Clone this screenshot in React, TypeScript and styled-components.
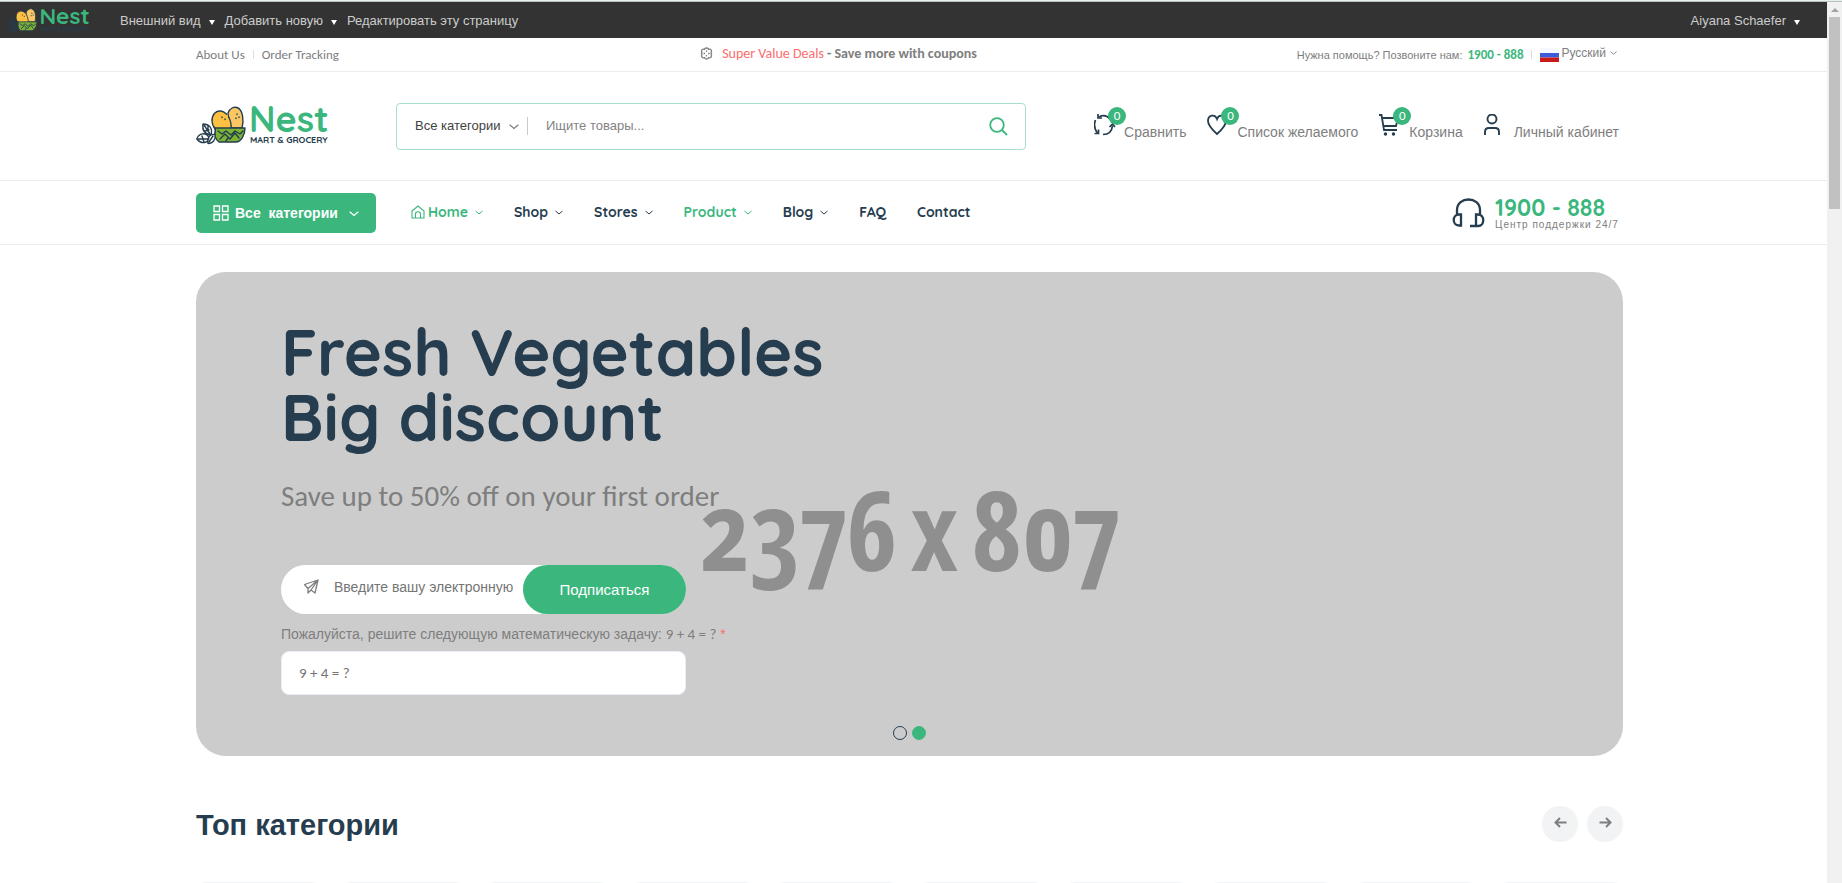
import React from 'react';
import styled, { createGlobalStyle, css } from 'styled-components';

const green = '#3bb77e';
const navy = '#253d4e';
const grey = '#7e7e7e';
const line = '#ececec';
const arial = '"Liberation Sans", Arial, sans-serif';
const lato = 'Carlito, Lato, "Liberation Sans", sans-serif';
const quick = 'Quicksand, "Liberation Sans", sans-serif';

const GlobalStyle = createGlobalStyle`
  * { box-sizing: border-box; }
  body { margin: 0; background: #fff; color: ${grey}; font: 400 14px/20px ${arial}; overflow: hidden; }
  a { color: inherit; text-decoration: none; }
  button, input, select { font: inherit; color: inherit; margin: 0; padding: 0; border: 0; background: none; outline: 0; }
  button { cursor: pointer; }
  h1, h2, p { margin: 0; }
  svg { display: block; flex: none; }
`;

const Shell = styled.div`display: flex; height: 100vh; flex-direction: column;`;
const Edge = styled.div`height: 2px; flex: none; background: #e9eeee; border-bottom: 1px solid #b9c1c1;`;
const View = styled.div`display: flex; flex: 1; min-height: 0;`;
const Page = styled.main`flex: 1; min-width: 0; overflow: hidden;`;

const Track = styled.div`
  width: 15px; flex: none; background: #f1f1f1; display: flex; flex-direction: column; align-items: center; padding-top: 6px; gap: 5px;
`;
const TrackArrow = styled.i`border: 4px solid transparent; border-top: 0; border-bottom: 4px solid #a3a3a3;`;
const Thumb = styled.div`width: 11px; height: 192px; background: #c1c1c1;`;

const gutter = css`padding: 0 204px 0 196px;`;

const AdminBar = styled.div`
  height: 36px; background: #333; color: #ccc; display: flex; align-items: center; padding: 2px 25px 0 6px; font-size: 13px;
`;
const AdminLogo = styled.a`margin: 0 32px 0 0;`;
const AdminNav = styled.nav`display: flex; gap: 10px;`;
const AdminButton = styled.button`display: flex; align-items: center; gap: 8px;`;
const Caret = styled.i`border: 3px solid transparent; border-bottom: 0; border-top: 5px solid #fff; margin-top: 3px;`;
const AdminUser = styled.div`margin-left: auto; padding-right: 2px;`;

const TopBar = styled.div`
  ${gutter} height: 34px; border-bottom: 1px solid ${line}; display: grid; grid-template-columns: 1fr auto 1fr; align-items: center;
  font: 400 13px/20px ${lato};
`;
const TopGroup = styled.div<{ end?: boolean }>`
  display: flex; align-items: center; ${p => p.end && 'justify-content: flex-end; padding-right: 6px;'}
`;
const Divider = styled.i`width: 1px; height: 9px; background: #ddd; margin: 0 8px;`;
const Deal = styled.p`display: flex; align-items: center; gap: 9px; font-size: 14px; font-weight: 700; padding-bottom: 2px; margin-right: 142px;`;
const DealLink = styled.a`color: #fd6e6e; font-weight: 400;`;
const Help = styled.span`font-family: ${arial}; font-size: 11px;`;
const HelpPhone = styled.a`color: ${green}; font-weight: 700; margin-left: 5px;`;
const Language = styled.button`display: flex; align-items: center; gap: 2px; font-family: ${arial}; font-size: 12px;`;
const LanguageName = styled.span`padding-bottom: 4px; display: flex; align-items: center; gap: 4px;`;

const Header = styled.header`${gutter} height: 109px; border-bottom: 1px solid ${line}; display: flex; align-items: center;`;
const LogoLink = styled.a`margin: 0 70px 0 0;`;
const Search = styled.form`
  flex: 0 1 630px; height: 47px; border: 1px solid #a9dfc6; border-radius: 4px; display: flex; align-items: center; padding: 0 17px 0 18px;
`;
const CategoryPick = styled.div`display: flex; align-items: center; border-right: 1px solid #cacaca; height: 18px; padding-right: 8px;`;
const CategorySelect = styled.select`appearance: none; color: #3f3f3f; font-size: 13px; line-height: 18px; width: 94px; cursor: pointer;`;
const SearchInput = styled.input`flex: 1; min-width: 0; margin-left: 18px; font-size: 13px; &::placeholder { color: #838383; opacity: 1; }`;
const Actions = styled.nav`margin-left: auto; padding: 3px 4px 0 0; display: flex; gap: 21px;`;
const Action = styled.a`display: flex; align-items: flex-start; gap: 8px; position: relative;`;
const ActionLabel = styled.span`padding-top: 8px;`;
const Badge = styled.span`
  position: absolute; left: 14px; top: -7px; width: 18px; height: 18px; border-radius: 50%; background: ${green}; color: #fff;
  font: 400 13px/18px ${lato}; text-align: center;
`;

const NavBar = styled.div`${gutter} height: 64px; border-bottom: 1px solid ${line}; display: flex; align-items: center;`;
const BrowseButton = styled.button`
  height: 40px; width: 180px; border-radius: 5px; background: ${green}; color: #fff; display: flex; align-items: center; padding: 0 17px;
  font: 700 14px/20px ${arial}; white-space: pre;
`;
const BrowseText = styled.span`margin: 0 auto 0 6px;`;
const Menu = styled.nav`display: flex; gap: 31px; margin-left: 35px; padding-bottom: 2px; font: 700 14px/20px ${quick}; color: ${navy};`;
const MenuLink = styled.a<{ active?: boolean }>`display: flex; align-items: center; gap: 3px; ${p => p.active && `color: ${green};`}`;
const MenuText = styled.span`margin-right: 4px;`;
const Hotline = styled.div`margin-left: auto; display: flex; align-items: center; gap: 10px;`;
const HotlineText = styled.div`min-width: 128px;`;
const HotlinePhone = styled.a`display: block; color: ${green}; font: 700 23px/24px ${quick};`;
const HotlineNote = styled.span`display: block; font-size: 10px; line-height: 10px; letter-spacing: 1px;`;

const Content = styled.div`${gutter} padding-top: 27px;`;
const Hero = styled.section`height: 484px; border-radius: 30px; background: #ccc; position: relative; padding: 47px 86px 0 85px; overflow: hidden;`;
const HeroSize = styled.div`
  position: absolute; inset: 0; display: flex; align-items: center; justify-content: center; gap: 13px; padding-top: 28px;
  font: 700 110px/120px "Open Sans Condensed", "Open Sans", sans-serif; font-variant-numeric: oldstyle-nums; color: #8f8f8f;
`;
const HeroBody = styled.div`position: relative;`;
const HeroTitle = styled.h1`font: 700 65px/65px ${quick}; color: ${navy};`;
const HeroLead = styled.p`font: 400 29px/36px ${lato}; margin-top: 29px;`;
const Subscribe = styled.form`margin-top: 51px; width: 405px;`;
const Pill = styled.div`display: flex; height: 49px; border-radius: 25px; background: #fff; padding-left: 22px;`;
const PillIcon = styled.span`padding-top: 14px; margin-right: 15px;`;
const PillInput = styled.input`flex: 1; min-width: 0; margin-right: 10px; padding-bottom: 6px; &::placeholder { color: #757575; opacity: 1; }`;
const PillButton = styled.button`width: 163px; border-radius: 25px; background: ${green}; color: #fff; font: 400 15px/20px ${arial};`;
const TaskLabel = styled.label`display: block; white-space: nowrap; margin: 10px 0 7px;`;
const Star = styled.span`color: #fd6e6e;`;
const TaskSum = styled.span`font-family: ${lato}; font-size: 15px;`;
const TaskInput = styled.input`
  display: block; width: 100%; height: 44px; border-radius: 8px; border: 1px solid #ecebfa; background: #fff; padding: 0 17px;
  font-family: ${lato}; font-size: 15px;
  &::placeholder { color: #757575; opacity: 1; }
`;
const Dots = styled.div`position: absolute; bottom: 16px; left: 0; right: 0; display: flex; justify-content: center; gap: 5px;`;
const Dot = styled.button<{ on?: boolean }>`
  width: 14px; height: 14px; border-radius: 50%; border: 1px solid ${p => (p.on ? green : navy)}; background: ${p => (p.on ? green : 'transparent')};
`;

const SectionHead = styled.div`display: flex; align-items: center; justify-content: space-between; margin: 49px 0 39px;`;
const SectionTitle = styled.h2`font: 700 29px/36px ${arial}; color: ${navy}; padding-top: 2px;`;
const Arrows = styled.div`display: flex; gap: 9px;`;
const ArrowButton = styled.button`width: 36px; height: 36px; border-radius: 50%; background: #f2f3f4; display: grid; place-items: center; padding-bottom: 3px;`;
const Cards = styled.div`display: grid; grid-template-columns: repeat(10, 1fr); gap: 20px;`;
const Card = styled.article`height: 180px; border: 1px solid #f2f3f4; border-radius: 10px;`;

const LogoMark = styled.svg`overflow: visible;`;

const Logo = ({ width, dim }: { width: number; dim?: boolean }) => (
  <LogoMark width={width} viewBox="0 0 130 40" role="img" aria-label="Nest">
    <g stroke={navy} strokeWidth="1.400" strokeLinecap="round" strokeLinejoin="round">
      <path d="M32 7C34 2 38 .8 41 1.500c6 2 7 13 5 20.500H34z" fill="#fbc765" />
      <path d="M16 15C16 8 20 4.500 25 5c6 1 11 9 10 18H19c-2-3-3-5-3-8z" fill="#fdc040" strokeDasharray="22 3" />
      <path d="M19 22h30c0 7-4 14-9 14H23c-4-3-5-9-4-14z" fill="#7cb236" />
      <path d="M22 25l4 3 4-3 5 4 4-4 5 3 3-3M24 33l5-5 5 5 5-6 4 5M30 35l2-3" fill="none" />
      <path d="M26 11v.5M29 13v.5M41 8v.5M43 11v.5M40 12v.5" fill="none" />
      <g fill={dim ? 'none' : '#fff'}>
        <path d="M7 18c6 0 10 4 8 11-6-1-9-5-8-11zM18 21c3 4 1 10-5 12" />
        <path d="M.8 33c2-6 9-7 12-2 0 6-7 8-12 2zM12 37.500c-1-6 2-10 7-9 1 5-2 9-7 9z" />
        <path d="M8 19l6 9M2 33h10M13 36l4-6M6 30l2 6M9 25l4-1M12 20v5" fill="none" />
      </g>
    </g>
    <text x="53" y="26" fontFamily="Quicksand" fontWeight="700" fontSize="36" fill={green}>Nest</text>
    <text x="54" y="37" fontFamily="Quicksand" fontWeight="700" fontSize="9" fill={navy}>MART &amp; GROCERY</text>
  </LogoMark>
);

const Chevron = ({ w = 8, sw = 1 }: { w?: number; sw?: number }) => (
  <svg width={w} height={w} viewBox="0 0 8 8" fill="none" stroke="currentColor" strokeWidth={sw}><path d="M.5 3L4 6l3.500-3" /></svg>
);

const Flag = () => (
  <svg width="19" height="14" viewBox="0 0 19 14">
    <path d="M0 0h19v5H0z" fill="#f5f9fd" /><path d="M0 5h19v4.500H0z" fill="#3b5bdb" /><path d="M0 9.500h19V14H0z" fill="#c91a1a" />
  </svg>
);

const Icon = ({ children, size = 22, sw = 2 }: { children: React.ReactNode; size?: number; sw?: number }) => (
  <svg width={size} height={size} viewBox="0 0 22 22" fill="none" stroke={navy} strokeWidth={sw}>{children}</svg>
);

const actions = [
  { label: 'Сравнить', count: 0, icon: <g strokeWidth="1.700"><path d="M1.500 6C-.2 10 .5 15 3.500 19M9 20.500c5.500 0 9-3 9.500-9M16 5C13 1.500 9 .8 5 3" /><path d="M.5 19.500h4V15.500M15.500 13L18.500 10l2.500 3M4 0v4h4" /></g> },
  { label: 'Список желаемого', count: 0, icon: <path d="M10 20C5 15.500 1 11.500 1 7c0-6 7-7.500 9-2 2-5.500 9-4 9 2 0 4.500-4 8.500-9 13z" strokeWidth="1.800" /> },
  { label: 'Корзина', count: 0, icon: <g strokeWidth="1.800"><path d="M0 1h2.500L5 16h13M3 4h16l-2 8H5" /><circle cx="6.500" cy="20" r=".8" /><circle cx="14.500" cy="20" r=".8" /></g> },
  { label: 'Личный кабинет', icon: <g strokeWidth="1.900"><circle cx="8" cy="5" r="4.500" /><path d="M1 21v-3c0-3 1-4 4-4h6c3 0 4 1 4 4v3" /></g> },
];

const menu = [
  { label: 'Home', active: true, home: true, sub: true },
  { label: 'Shop', sub: true },
  { label: 'Stores', sub: true },
  { label: 'Product', active: true, sub: true },
  { label: 'Blog', sub: true },
  { label: 'FAQ' },
  { label: 'Contact' },
];

export default function App() {
  return (
    <Shell>
      <GlobalStyle />
      <Edge />
      <View>
        <Page>
          <AdminBar>
            <AdminLogo href="#"><Logo width={82} dim /></AdminLogo>
            <AdminNav>
              <AdminButton>Внешний вид<Caret /></AdminButton>
              <AdminButton>Добавить новую<Caret /></AdminButton>
              <a href="#">Редактировать эту страницу</a>
            </AdminNav>
            <AdminUser><AdminButton>Aiyana Schaefer<Caret /></AdminButton></AdminUser>
          </AdminBar>

          <TopBar>
            <TopGroup>
              <a href="#">About Us</a><Divider /><a href="#">Order Tracking</a>
            </TopGroup>
            <Deal>
              <svg width="13" height="13" viewBox="0 0 13 13" fill="none" stroke={grey} strokeWidth="1.300" strokeLinejoin="round">
                <path d="M4.500 2.500C4.500.5 8.500.5 8.500 2.500c2-1 4 1 2.500 3.200.8.500.8 1.100 0 1.600C12.500 9.500 10.500 11.500 8.500 10.500c0 2-4 2-4 0-2 1-4-1-2.500-3.200-.8-.5-.8-1.100 0-1.600C.5 3.500 2.500 1.500 4.500 2.500zM6.500 3.500V5M6.500 8v1.500M3.500 6.500H5M8 6.500h1.500" />
              </svg>
              <span><DealLink href="#">Super Value Deals</DealLink> - Save more with coupons</span>
            </Deal>
            <TopGroup end>
              <Help>Нужна помощь? Позвоните нам:</Help>
              <HelpPhone href="#">1900 - 888</HelpPhone>
              <Divider />
              <Language><Flag /><LanguageName>Русский<Chevron w={7} /></LanguageName></Language>
            </TopGroup>
          </TopBar>

          <Header>
            <LogoLink href="#"><Logo width={130} /></LogoLink>
            <Search>
              <CategoryPick>
                <CategorySelect aria-label="Категория"><option>Все категории</option></CategorySelect>
                <Chevron w={10} />
              </CategoryPick>
              <SearchInput aria-label="Поиск" placeholder="Ищите товары..." />
              <button type="button" aria-label="Искать">
                <svg width="19" height="19" viewBox="0 0 19 19" fill="none" stroke={green} strokeWidth="1.800"><circle cx="8" cy="8" r="6.800" /><path d="M13 13l5 5" /></svg>
              </button>
            </Search>
            <Actions>
              {actions.map(a => (
                <Action href="#" key={a.label}>
                  <Icon>{a.icon}</Icon>
                  {a.count !== undefined && <Badge>{a.count}</Badge>}
                  <ActionLabel>{a.label}</ActionLabel>
                </Action>
              ))}
            </Actions>
          </Header>

          <NavBar>
            <BrowseButton>
              <svg width="16" height="16" viewBox="0 0 16 16" fill="none" stroke="#fff" strokeWidth="1.300">
                <path d="M1 1h5.500v5.500H1zM9.500 1H15v5.500H9.500zM1 9.500h5.500V15H1zM9.500 9.500H15V15H9.500z" />
              </svg>
              <BrowseText>{'Все  категории'}</BrowseText>
              <Chevron w={10} />
            </BrowseButton>
            <Menu>
              {menu.map(m => (
                <MenuLink href="#" key={m.label} active={m.active}>
                  {m.home && (
                    <svg width="14" height="14" viewBox="0 0 14 14" fill="none" stroke={green} strokeWidth="1.100">
                      <path d="M1 6l6-5 6 5v7H1zM4.500 13V9c0-3 5-3 5 0v4" />
                    </svg>
                  )}
                  {m.sub ? <><MenuText>{m.label}</MenuText><Chevron w={8} /></> : m.label}
                </MenuLink>
              ))}
            </Menu>
            <Hotline>
              <svg width="33" height="30" viewBox="0 0 33 30" fill="none" stroke={navy} strokeWidth="2.300">
                <path d="M5 16v-4C5 -2 28 -2 28 12v4M9 16.500v11H7c-7 0-7-11 0-11zM18 28h8c7 0 7-11.500 0-11.500h-2V28" />
              </svg>
              <HotlineText>
                <HotlinePhone href="#">1900 - 888</HotlinePhone>
                <HotlineNote>Центр поддержки 24/7</HotlineNote>
              </HotlineText>
            </Hotline>
          </NavBar>

          <Content>
            <Hero>
              <HeroSize><span>2376</span><span>x</span><span>807</span></HeroSize>
              <HeroBody>
                <HeroTitle>Fresh Vegetables<br />Big discount</HeroTitle>
                <HeroLead>Save up to 50% off on your first order</HeroLead>
                <Subscribe>
                  <Pill>
                    <PillIcon>
                      <svg width="16" height="16" viewBox="0 0 16 16" fill="none" stroke={grey} strokeWidth="1.300" strokeLinejoin="round">
                        <path d="M15 1L1.500 5.500l3.500 4L15 1l-3 13-4-3-3 3V9.500M8 11l7-10" />
                      </svg>
                    </PillIcon>
                    <PillInput type="email" aria-label="Электронная почта" placeholder="Введите вашу электронную почту" />
                    <PillButton type="button">Подписаться</PillButton>
                  </Pill>
                  <TaskLabel htmlFor="task">
                    Пожалуйста, решите следующую математическую задачу: <TaskSum>9 + 4 = ?</TaskSum> <Star>*</Star>
                  </TaskLabel>
                  <TaskInput id="task" placeholder="9 + 4 = ?" />
                </Subscribe>
              </HeroBody>
              <Dots><Dot aria-label="Слайд 1" /><Dot on aria-label="Слайд 2" /></Dots>
            </Hero>

            <SectionHead>
              <SectionTitle>Топ категории</SectionTitle>
              <Arrows>
                <ArrowButton aria-label="Назад">
                  <svg width="13" height="11" viewBox="0 0 13 11" fill="none" stroke={grey} strokeWidth="2"><path d="M12.500 5.500h-11M6 1L1.500 5.500 6 10" /></svg>
                </ArrowButton>
                <ArrowButton aria-label="Вперёд">
                  <svg width="13" height="11" viewBox="0 0 13 11" fill="none" stroke={grey} strokeWidth="2"><path d="M.5 5.500h11M7 1l4.500 4.500L7 10" /></svg>
                </ArrowButton>
              </Arrows>
            </SectionHead>
            <Cards>{Array.from({ length: 10 }, (_, i) => <Card key={i} />)}</Cards>
          </Content>
        </Page>
        <Track><TrackArrow /><Thumb /></Track>
      </View>
    </Shell>
  );
}
